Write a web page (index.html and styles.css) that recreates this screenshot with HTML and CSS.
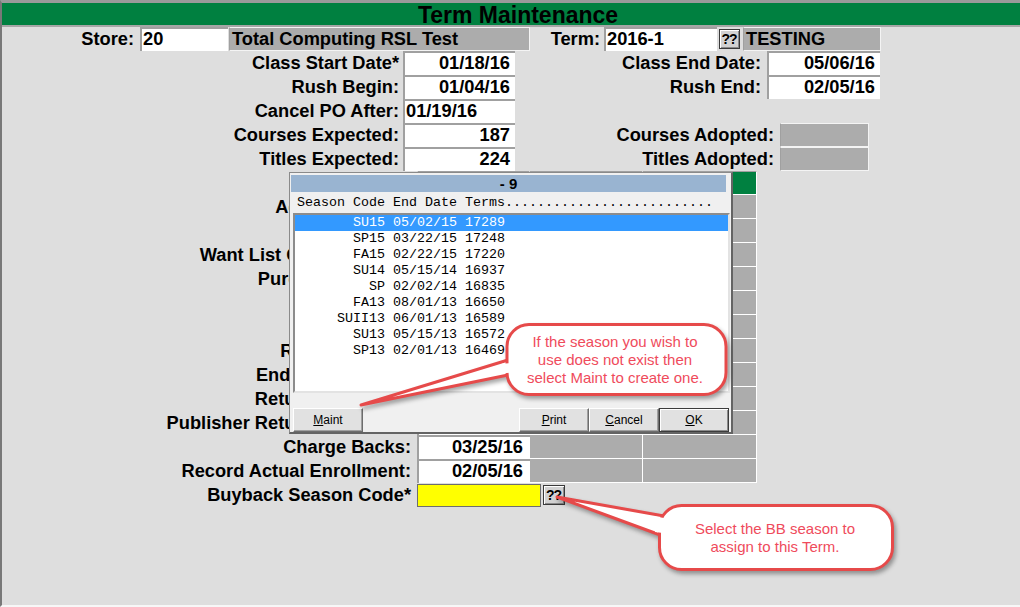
FILE: index.html
```html
<!DOCTYPE html>
<html>
<head>
<meta charset="utf-8">
<title>Term Maintenance</title>
<link rel="stylesheet" href="styles.css">
</head>
<body>
<div class="screen">
  <div class="app">
    <div class="titlebar">Term Maintenance</div>
    <div class="form">
      <div class="row">
        <div class="lbl l-store">Store:</div>
        <div class="inp i-store">20</div>
        <div class="disp d-store">Total Computing RSL Test</div>
        <div class="lbl l-term">Term:</div>
        <div class="inp i-term">2016-1</div>
        <div class="qbtn q-term">??</div>
        <div class="disp d-term">TESTING</div>
      </div>
      <div class="row">
        <div class="lbl l-a">Class Start Date*</div>
        <div class="inp i-a r">01/18/16</div>
        <div class="lbl l-b">Class End Date:</div>
        <div class="inp i-b r">05/06/16</div>
      </div>
      <div class="row">
        <div class="lbl l-a">Rush Begin:</div>
        <div class="inp i-a r">01/04/16</div>
        <div class="lbl l-b">Rush End:</div>
        <div class="inp i-b r">02/05/16</div>
      </div>
      <div class="row">
        <div class="lbl l-a">Cancel PO After:</div>
        <div class="inp i-a">01/19/16</div>
      </div>
      <div class="row">
        <div class="lbl l-a">Courses Expected:</div>
        <div class="inp i-a r">187</div>
        <div class="lbl l-c">Courses Adopted:</div>
        <div class="disp d-c"></div>
      </div>
      <div class="row">
        <div class="lbl l-a">Titles Expected:</div>
        <div class="inp i-a r">224</div>
        <div class="lbl l-c">Titles Adopted:</div>
        <div class="disp d-c"></div>
      </div>
      <div class="row">
        <div class="lbl l-g"></div>
        <div class="cell c1 hd"></div>
        <div class="cell c2 hd"></div>
        <div class="cell c3 hd"></div>
      </div>
      <div class="row">
        <div class="lbl l-g">Adoptions Due:</div>
        <div class="inp c1"></div>
        <div class="cell c2"></div>
        <div class="cell c3"></div>
      </div>
      <div class="row">
        <div class="lbl l-g"></div>
        <div class="inp c1"></div>
        <div class="cell c2"></div>
        <div class="cell c3"></div>
      </div>
      <div class="row">
        <div class="lbl l-g">Want List Creation Date:</div>
        <div class="inp c1"></div>
        <div class="cell c2"></div>
        <div class="cell c3"></div>
      </div>
      <div class="row">
        <div class="lbl l-g">Purchase Orders:</div>
        <div class="inp c1"></div>
        <div class="cell c2"></div>
        <div class="cell c3"></div>
      </div>
      <div class="row">
        <div class="lbl l-g"></div>
        <div class="inp c1"></div>
        <div class="cell c2"></div>
        <div class="cell c3"></div>
      </div>
      <div class="row">
        <div class="lbl l-g"></div>
        <div class="inp c1"></div>
        <div class="cell c2"></div>
        <div class="cell c3"></div>
      </div>
      <div class="row">
        <div class="lbl l-g">Returns Begin:</div>
        <div class="inp c1"></div>
        <div class="cell c2"></div>
        <div class="cell c3"></div>
      </div>
      <div class="row">
        <div class="lbl l-g">End Rush Return:</div>
        <div class="inp c1"></div>
        <div class="cell c2"></div>
        <div class="cell c3"></div>
      </div>
      <div class="row">
        <div class="lbl l-g">Returns Deadline:</div>
        <div class="inp c1"></div>
        <div class="cell c2"></div>
        <div class="cell c3"></div>
      </div>
      <div class="row">
        <div class="lbl l-g">Publisher Returns Deadline:</div>
        <div class="inp c1"></div>
        <div class="cell c2"></div>
        <div class="cell c3"></div>
      </div>
      <div class="row">
        <div class="lbl l-g">Charge Backs:</div>
        <div class="inp c1 rr">03/25/16</div>
        <div class="cell c2"></div>
        <div class="cell c3"></div>
      </div>
      <div class="row">
        <div class="lbl l-g">Record Actual Enrollment:</div>
        <div class="inp c1 rr">02/05/16</div>
        <div class="cell c2"></div>
        <div class="cell c3"></div>
      </div>
      <div class="row">
        <div class="lbl l-g">Buyback Season Code*</div>
        <div class="yel"></div>
        <div class="qbtn q-bb">??</div>
      </div>
    </div>
  </div>

  <div class="dialog">
    <div class="dtitle">- 9</div>
    <div class="dhead">Season Code End Date Terms..........................</div>
    <div class="dlist">
      <div class="li sel">       SU15 05/02/15 17289</div>
      <div class="li">       SP15 03/22/15 17248</div>
      <div class="li">       FA15 02/22/15 17220</div>
      <div class="li">       SU14 05/15/14 16937</div>
      <div class="li">         SP 02/02/14 16835</div>
      <div class="li">       FA13 08/01/13 16650</div>
      <div class="li">     SUII13 06/01/13 16589</div>
      <div class="li">       SU13 05/15/13 16572</div>
      <div class="li">       SP13 02/01/13 16469</div>
    </div>
    <div class="dbtns">
      <div class="btn"><u>M</u>aint</div>
      <div class="btngroup">
        <div class="btn"><u>P</u>rint</div>
        <div class="btn"><u>C</u>ancel</div>
        <div class="btn def"><u>O</u>K</div>
      </div>
    </div>
  </div>

  <svg class="callouts" width="1020" height="607" viewBox="0 0 1020 607" xmlns="http://www.w3.org/2000/svg">
    <g class="bubble">
      <polygon points="508,360 361,405 508,375" fill="#fff" stroke="#e64a4a" stroke-width="3" stroke-linejoin="round"/>
      <rect x="507" y="324.5" width="219" height="70" rx="22" ry="22" fill="#fff" stroke="#e64a4a" stroke-width="3"/>
      <polygon points="502,363.8 512,363 512,372.5 502,373.5" fill="#fff"/>
    </g>
    <g class="bubble">
      <polygon points="664,516 557,497 663,536" fill="#fff" stroke="#e64a4a" stroke-width="3" stroke-linejoin="round"/>
      <rect x="659.5" y="505.5" width="233" height="64" rx="22" ry="22" fill="#fff" stroke="#e64a4a" stroke-width="3"/>
      <polygon points="655,516.5 667,518.5 667,533.5 655,532" fill="#fff"/>
    </g>
  </svg>
  <div class="ctext c-one">If the season you wish to<br>use does not exist then<br>select Maint to create one.</div>
  <div class="ctext c-two">Select the BB season to<br>assign to this Term.</div>
</div>
</body>
</html>
```
FILE: styles.css
```css
* { box-sizing: border-box; }
html, body { margin: 0; padding: 0; }
body {
  width: 1020px;
  height: 607px;
  overflow: hidden;
  background: #dedede;
  font-family: "Liberation Sans", Arial, sans-serif;
  color: #000;
}
.screen {
  position: relative;
  width: 1020px;
  height: 607px;
}
.app {
  width: 1020px;
  height: 607px;
  background: #dedede;
  border-left: 2px solid #787878;
  border-top: 3px solid #9a9a9a;
  border-bottom: 2px solid #f7f7f7;
}
.titlebar {
  height: 24px;
  background: #008040;
  border-bottom: 2px solid #a6a6a6;
  font-size: 23px;
  font-weight: bold;
  line-height: 24px;
  text-align: center;
  padding-left: 14px;
  white-space: nowrap;
}
.form {
  display: flex;
  flex-direction: column;
}
.row {
  display: flex;
  height: 24px;
  font-size: 18.25px;
  font-weight: bold;
  line-height: 24px;
  white-space: nowrap;
}
.lbl { text-align: right; flex: none; }
.inp {
  flex: none;
  background: #fff;
  border-left: 2px solid #a0a0a0;
  border-top: 2px solid #a0a0a0;
  line-height: 20px;
  padding-left: 1px;
}
.inp.r { text-align: right; padding-right: 5px; }
.inp.rr { text-align: right; padding-right: 7px; }
.disp {
  flex: none;
  background: #acacac;
  border: 1px solid #f4f4f4;
  border-left-color: #a0a0a0;
  line-height: 22px;
  padding-left: 2px;
}
.qbtn {
  flex: none;
  align-self: center;
  height: 20px;
  background: #d2d2d2;
  border: 1px solid #3a3a3a;
  box-shadow: inset 1px 1px #ffffff, inset -1px -1px #8a8a8a;
  font-size: 14px;
  line-height: 18px;
  text-align: center;
  letter-spacing: -1px;
  padding-right: 1px;
}

/* row 1 */
.l-store { width: 132px; }
.i-store { margin-left: 6px; width: 88px; }
.d-store { margin-left: 1px; width: 301px; }
.l-term { width: 70px; }
.i-term { margin-left: 4px; width: 113px; }
.q-term { margin-left: 2px; width: 21px; }
.d-term { margin-left: 3px; width: 138px; }

/* rows 2-6 */
.l-a { width: 397px; }
.i-a { margin-left: 4px; width: 112px; }
.l-b { width: 246px; }
.i-b { margin-left: 6px; width: 113px; }
.l-c { width: 259px; }
.d-c { margin-left: 6px; width: 89px; }

/* grid rows */
.l-g { width: 409px; }
.c1 { margin-left: 6px; width: 113px; }
.c2 { width: 113px; }
.c3 { width: 114px; }
.cell {
  flex: none;
  background: #acacac;
  border-right: 1px solid #fff;
  border-bottom: 1px solid #fff;
}
.cell.c1 { border-left: 1px solid #fff; }
.cell.hd {
  background: #008040;
  border-top: 1px solid #a0a0a0;
  border-bottom: 1px solid #fff;
}
.yel {
  flex: none;
  align-self: center;
  margin-left: 6px;
  width: 124px;
  height: 23px;
  background: #ffff00;
  border: 1px solid #6e6e6e;
}
.q-bb { margin-left: 2px; width: 22px; }

/* dialog */
.dialog {
  position: absolute;
  left: 289px;
  top: 172px;
  width: 444px;
  height: 262px;
  background: #f0f0f0;
  border-style: solid;
  border-width: 1px 2px 2px 1px;
  border-color: #8a8a8a #646464 #646464 #8a8a8a;
  display: flex;
  flex-direction: column;
}
.dtitle {
  margin: 2px 0 0 1px;
  width: 435px;
  height: 17px;
  background: #99b4d1;
  font-size: 15px;
  font-weight: bold;
  line-height: 17px;
  text-align: center;
  white-space: pre;
}
.dhead {
  height: 21px;
  padding-left: 7px;
  font-family: "Liberation Mono", "Courier New", monospace;
  font-size: 13.33px;
  line-height: 21px;
  white-space: pre;
}
.dlist {
  margin-left: 3px;
  width: 437px;
  height: 180px;
  background: #fff;
  border-style: solid;
  border-width: 2px;
  border-color: #8c8c8c #e3e3e3 #e3e3e3 #8c8c8c;
  font-family: "Liberation Mono", "Courier New", monospace;
  font-size: 13.33px;
  line-height: 16px;
}
.li {
  height: 16px;
  padding-left: 2px;
  white-space: pre;
}
.li.sel { background: #3399ff; color: #fff; }
.dbtns {
  margin-top: 15px;
  height: 24px;
  display: flex;
  justify-content: space-between;
  padding-left: 3px;
  padding-right: 2px;
}
.btngroup { display: flex; }
.btn {
  width: 70px;
  height: 24px;
  background: #e1e1e1;
  border: 1px solid;
  border-color: #ffffff #6d6d6d #6d6d6d #ffffff;
  box-shadow: inset -1px -1px #a0a0a0;
  font-family: "Liberation Sans", Arial, sans-serif;
  font-size: 12px;
  line-height: 22px;
  text-align: center;
}
.btn.def {
  border-color: #3c3c3c;
  box-shadow: inset 1px 1px #ffffff, inset -1px -1px #8a8a8a;
}

/* callouts */
.callouts {
  position: absolute;
  left: 0;
  top: 0;
  pointer-events: none;
}
.bubble { filter: drop-shadow(2px 3px 2px rgba(0, 0, 0, 0.35)); }
.ctext {
  position: absolute;
  display: flex;
  align-items: center;
  justify-content: center;
  text-align: center;
  font-family: "Liberation Sans", Arial, sans-serif;
  font-size: 15px;
  line-height: 18px;
  color: #ef4b5c;
}
.c-one { left: 506px; top: 323px; width: 218px; height: 73px; }
.c-two { left: 658px; top: 504px; width: 234px; height: 67px; }
```
